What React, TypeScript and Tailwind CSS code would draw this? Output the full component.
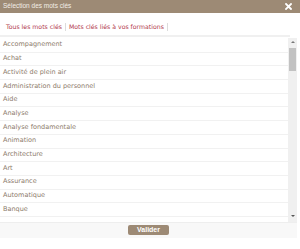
import React from "react";

const items = [
  "Accompagnement",
  "Achat",
  "Activité de plein air",
  "Administration du personnel",
  "Aide",
  "Analyse",
  "Analyse fondamentale",
  "Animation",
  "Architecture",
  "Art",
  "Assurance",
  "Automatique",
  "Banque",
];

export default function App() {
  return (
    <div className="w-[300px] h-[249px] bg-white overflow-hidden relative" style={{ fontFamily: '"DejaVu Sans", Verdana, sans-serif' }}>
      <div className="h-[13px] bg-[#9d8a75] flex items-center justify-between pl-[3px] pr-[8px]">
        <span className="text-[6.5px] text-[#f3eee8] leading-none" style={{ fontFamily: '"Liberation Sans", Arial, sans-serif' }}>Sélection des mots clés</span>
        <svg width="7" height="7" viewBox="0 0 7 7">
          <path d="M1 1L6 6M6 1L1 6" stroke="#ffffff" strokeWidth="1.8" strokeLinecap="square" />
        </svg>
      </div>
      <div className="h-[22px] flex items-center pl-[6px] text-[6.2px] text-[#b33a4e] pt-[6px]">
        <span>Tous les mots clés</span>
        <span className="mx-[3px] w-px h-[8px] bg-[#dcdcdc]" />
        <span>Mots clés liés à vos formations</span>
        <span className="ml-[3px] w-px h-[8px] bg-[#dcdcdc]" />
      </div>
      <div className="h-[2px] bg-[#f0f0f0] w-[290px]" />
      <div className="flex h-[184px] mt-[1px]">
        <div className="w-[288px] overflow-hidden pt-[1px]">
          {items.map((t) => (
            <div key={t} className="h-[13.7px] flex items-center pl-[3px] border-b border-[#f1f1f1] text-[6.5px] text-[#8c7a6a]">
              {t}
            </div>
          ))}
        </div>
        <div className="w-[9px] bg-[#f0f0f0] relative">
          <div className="absolute top-[3px] left-[3px] w-0 h-0 border-l-[2px] border-r-[2px] border-b-[2px] border-l-transparent border-r-transparent border-b-[#777]" />
          <div className="absolute top-[10px] left-[1px] w-[7px] h-[23px] bg-[#c2c2c2]" />
          <div className="absolute bottom-[5px] left-[3px] w-0 h-0 border-l-[2px] border-r-[2px] border-t-[2px] border-l-transparent border-r-transparent border-t-[#555]" />
        </div>
      </div>
      <div className="h-[16px] bg-[#f8f8f8] w-[297px] border-t border-[#eeeeee] flex items-center justify-center">
        <div className="w-[41px] h-[10px] mt-[-2px] bg-[#9d8a75] rounded-[2px] flex items-center justify-center text-white font-bold text-[7px] leading-none" style={{ fontFamily: '"Liberation Sans", Arial, sans-serif' }}>
          Valider
        </div>
      </div>
    </div>
  );
}
